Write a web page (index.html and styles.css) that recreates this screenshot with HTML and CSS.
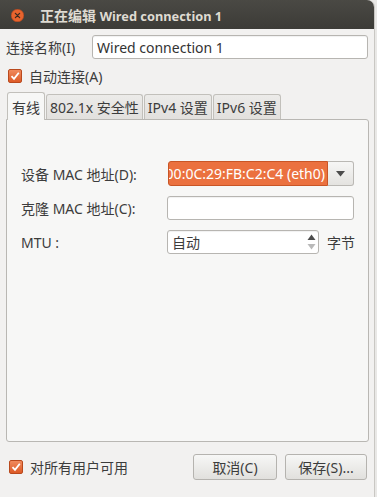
FILE: index.html
```html
<!DOCTYPE html>
<html>
<head>
<meta charset="utf-8">
<link rel="stylesheet" href="styles.css">
</head>
<body>
<div class="window">
  <div class="titlebar">
    <span class="close"><svg width="13" height="13" viewBox="0 0 13 13"><circle cx="6.5" cy="6.5" r="6.3" fill="#e8642e" stroke="#b8471c" stroke-width="0.6"/><path d="M4.4 4.4 L8.6 8.6 M8.6 4.4 L4.4 8.6" stroke="#3a2a20" stroke-width="1.3" stroke-linecap="round"/></svg></span>
    <span class="title">正在编辑 <span class="title-latin">Wired connection 1</span></span>
  </div>
  <div class="body">
    <div class="name-row">
      <span class="label">连接名称(I)</span>
      <div class="entry name-entry">Wired connection 1</div>
    </div>
    <label class="check-row">
      <span class="check"><svg width="10" height="10" viewBox="0 0 10 10"><path d="M1.5 5.2 L4 7.8 L8.8 1.8" fill="none" stroke="#fff" stroke-width="1.8"/></svg></span>
      <span>自动连接(A)</span>
    </label>
    <div class="tabs">
      <div class="tab active">有线</div>
      <div class="tab">802.1x 安全性</div>
      <div class="tab">IPv4 设置</div>
      <div class="tab">IPv6 设置</div>
    </div>
    <div class="panel">
      <div class="form">
        <span class="label">设备 MAC 地址(D):</span>
        <div class="combo">
          <div class="combo-text"><span class="sel">00:0C:29:FB:C2:C4 (eth0)</span></div>
          <div class="combo-btn"><svg width="9" height="6" viewBox="0 0 9 6"><path d="M0 0 H9 L4.5 5.5 Z" fill="#4c4c4c"/></svg></div>
        </div>
        <span class="label">克隆 MAC 地址(C):</span>
        <div class="entry clone"></div>
        <span class="label">MTU :</span>
        <div class="spin-row">
          <div class="entry spin">
            <span>自动</span>
            <span class="arrows">
              <svg width="9" height="20" viewBox="0 0 9 20"><path d="M0.5 8 L4.5 2.5 L8.5 8 Z" fill="#4c4c4c"/><path d="M0.5 12 L4.5 17.5 L8.5 12 Z" fill="#b9b9b9"/></svg>
            </span>
          </div>
          <span class="unit">字节</span>
        </div>
      </div>
    </div>
    <div class="footer">
      <label class="check-row foot-check">
        <span class="check"><svg width="10" height="10" viewBox="0 0 10 10"><path d="M1.5 5.2 L4 7.8 L8.8 1.8" fill="none" stroke="#fff" stroke-width="1.8"/></svg></span>
        <span>对所有用户可用</span>
      </label>
      <div class="buttons">
        <button class="btn cancel">取消(C)</button>
        <button class="btn save">保存(S)...</button>
      </div>
    </div>
  </div>
</div>
</body>
</html>
```
FILE: styles.css
```css
html, body {
  margin: 0;
  padding: 0;
}
body {
  width: 377px;
  height: 497px;
  background: #e9e8e6;
  font-family: "Noto Sans", "Noto Sans CJK SC", sans-serif;
  font-size: 14px;
  color: #3c3c3c;
  overflow: hidden;
}
.window {
  width: 375px;
  height: 497px;
  background: #f2f1f0;
  display: flex;
  flex-direction: column;
  border-top-right-radius: 7px;
  border-right: 1px solid #c9c7c3;
  box-sizing: border-box;
}
.titlebar {
  height: 29px;
  flex: none;
  background: linear-gradient(#4a4944, #3c3b37);
  border-top-right-radius: 7px;
  display: flex;
  align-items: center;
  padding-left: 11px;
  color: #dfdbd2;
}
.close {
  width: 13px;
  height: 13px;
  display: flex;
  margin-top: 1px;
}
.title {
  margin-left: 16px;
  font-weight: bold;
  font-size: 14px;
}
.title-latin {
  font-size: 12.8px;
}
.body {
  flex: 1;
  display: flex;
  flex-direction: column;
  padding: 6px 6px 0 6px;
}
.name-row {
  display: flex;
  align-items: center;
  height: 24px;
}
.name-row .label {
  width: 86px;
  flex: none;
}
.entry {
  background: #fff;
  border: 1px solid #b7b5b1;
  border-radius: 3px;
  box-sizing: border-box;
  height: 24px;
  display: flex;
  align-items: center;
  padding-left: 4px;
  box-shadow: inset 0 1px 1px rgba(0,0,0,0.06);
}
.name-entry {
  width: 277px;
  color: #333;
}
.check-row {
  display: flex;
  align-items: center;
  gap: 7px;
  padding-left: 2px;
}
.body > .check-row {
  margin-top: 5px;
  height: 24px;
}
.check {
  width: 14px;
  height: 14px;
  box-sizing: border-box;
  border-radius: 2px;
  background: linear-gradient(#f08a5d, #dd5a26);
  border: 1px solid #b9491d;
  display: flex;
  align-items: center;
  justify-content: center;
}
.tabs {
  display: flex;
  align-items: flex-end;
  margin-top: 4px;
  height: 27px;
  padding-left: 1px;
  gap: 1px;
}
.tab {
  height: 25px;
  box-sizing: border-box;
  padding: 0 3px;
  border: 1px solid #c2c0bb;
  border-bottom: none;
  border-radius: 3px 3px 0 0;
  background: linear-gradient(#ecebe9, #e2e0dd);
  display: flex;
  align-items: center;
}
.tab.active {
  height: 28px;
  background: #f7f7f6;
  position: relative;
  z-index: 1;
  margin-bottom: -1px;
  padding: 0 4px;
}
.panel {
  height: 323px;
  box-sizing: border-box;
  width: 363px;
  background: #f7f7f6;
  border: 1px solid #b9b7b3;
  border-radius: 0 3px 3px 3px;
  padding: 41px 0 0 14px;
}
.form {
  display: grid;
  grid-template-columns: 146px 200px;
  row-gap: 10px;
  align-items: center;
}
.combo {
  display: flex;
  height: 25px;
  width: 186px;
  margin-left: 1px;
}
.combo-text {
  flex: 1;
  min-width: 0;
  background: #eb713f;
  border: 1px solid #c85526;
  border-radius: 3px 0 0 3px;
  overflow: hidden;
  display: flex;
  justify-content: flex-end;
  align-items: center;
  white-space: nowrap;
  padding-right: 2px;
}
.sel {
  color: #fff;
  flex: none;
}
.combo-btn {
  width: 26px;
  flex: none;
  border: 1px solid #bab8b4;
  border-left: none;
  border-radius: 0 3px 3px 0;
  background: linear-gradient(#f6f6f5, #e4e3e0);
  display: flex;
  align-items: center;
  justify-content: center;
  box-sizing: border-box;
}
.clone {
  width: 187px;
  height: 24px;
}
.spin-row {
  display: flex;
  align-items: center;
  gap: 8px;
}
.spin {
  width: 152px;
  flex: none;
  height: 24px;
  justify-content: space-between;
  padding-right: 2px;
}
.unit {
  white-space: nowrap;
}
.arrows {
  display: flex;
  align-items: center;
}
.footer {
  flex: 1;
  display: flex;
  align-items: center;
  justify-content: space-between;
  padding-bottom: 14px;
  padding-right: 1px;
}
.foot-check {
  padding-left: 3px;
  margin-top: 8px;
}
.buttons {
  display: flex;
  gap: 8px;
  margin-top: 8px;
}
.btn {
  font: inherit;
  color: #3c3c3c;
  height: 26px;
  border: 1px solid #b5b3af;
  border-radius: 3px;
  background: linear-gradient(#f7f7f6, #e1e0dd);
  padding: 0;
}
.cancel { width: 84px; }
.save { width: 82px; }
```
